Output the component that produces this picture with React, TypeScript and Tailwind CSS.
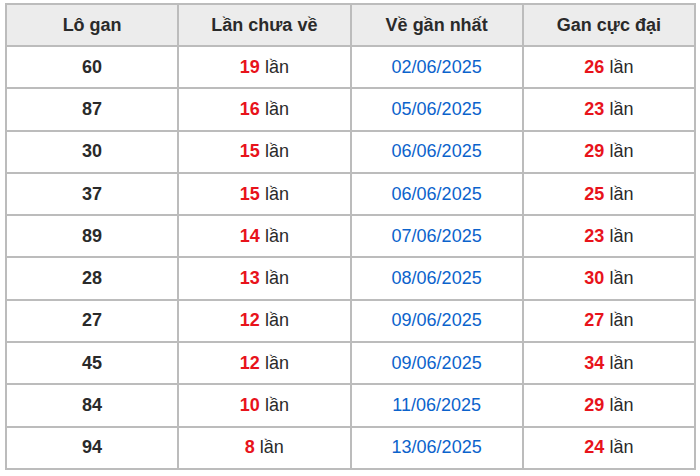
import React from "react";

const rows = [
  ["60", "19", "02/06/2025", "26"],
  ["87", "16", "05/06/2025", "23"],
  ["30", "15", "06/06/2025", "29"],
  ["37", "15", "06/06/2025", "25"],
  ["89", "14", "07/06/2025", "23"],
  ["28", "13", "08/06/2025", "30"],
  ["27", "12", "09/06/2025", "27"],
  ["45", "12", "09/06/2025", "34"],
  ["84", "10", "11/06/2025", "29"],
  ["94", "8", "13/06/2025", "24"],
];

export default function App() {
  return (
    <div
      className="w-[700px] h-[476px] bg-white pt-[3px] pl-[5px]"
      style={{ fontFamily: '"Liberation Sans", Arial, sans-serif' }}
    >
      <table className="w-[691px] border-collapse text-[18px] text-[#2a2a2a]">
        <thead>
          <tr className="h-[42px] bg-[#ececec]">
            {["Lô gan", "Lần chưa về", "Về gần nhất", "Gan cực đại"].map((h) => (
              <th key={h} className="w-1/4 border-2 border-[#bcbcbc] font-bold text-center p-0">
                {h}
              </th>
            ))}
          </tr>
        </thead>
        <tbody>
          {rows.map((r, i) => (
            <tr key={i} className="h-[42.3px]">
              <td className="border-2 border-[#bcbcbc] text-center font-bold p-0">{r[0]}</td>
              <td className="border-2 border-[#bcbcbc] text-center p-0">
                <span className="font-bold text-[#e8131b]">{r[1]}</span> lần
              </td>
              <td className="border-2 border-[#bcbcbc] text-center p-0 text-[#0b63cc]">{r[2]}</td>
              <td className="border-2 border-[#bcbcbc] text-center p-0">
                <span className="font-bold text-[#e8131b]">{r[3]}</span> lần
              </td>
            </tr>
          ))}
        </tbody>
      </table>
    </div>
  );
}
